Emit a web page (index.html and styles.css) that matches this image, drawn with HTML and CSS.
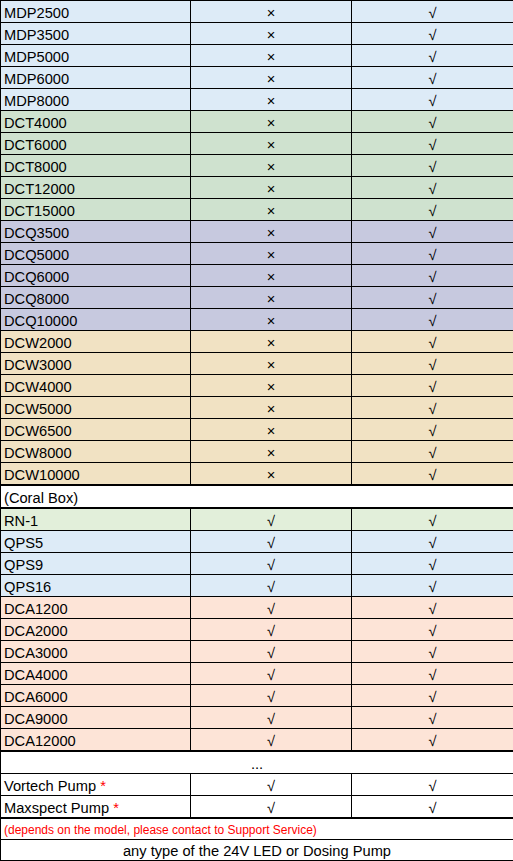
FILE: index.html
```html
<!DOCTYPE html>
<html>
<head>
<meta charset="utf-8">
<link rel="stylesheet" href="styles.css">
</head>
<body>
<table class="compat">
<colgroup><col class="c1"><col class="c2"><col class="c3"></colgroup>
<tbody>
<tr class="mdp"><td>MDP2500</td><td class="mk">×</td><td class="mk">√</td></tr>
<tr class="mdp"><td>MDP3500</td><td class="mk">×</td><td class="mk">√</td></tr>
<tr class="mdp"><td>MDP5000</td><td class="mk">×</td><td class="mk">√</td></tr>
<tr class="mdp"><td>MDP6000</td><td class="mk">×</td><td class="mk">√</td></tr>
<tr class="mdp"><td>MDP8000</td><td class="mk">×</td><td class="mk">√</td></tr>
<tr class="dct"><td>DCT4000</td><td class="mk">×</td><td class="mk">√</td></tr>
<tr class="dct"><td>DCT6000</td><td class="mk">×</td><td class="mk">√</td></tr>
<tr class="dct"><td>DCT8000</td><td class="mk">×</td><td class="mk">√</td></tr>
<tr class="dct"><td>DCT12000</td><td class="mk">×</td><td class="mk">√</td></tr>
<tr class="dct"><td>DCT15000</td><td class="mk">×</td><td class="mk">√</td></tr>
<tr class="dcq"><td>DCQ3500</td><td class="mk">×</td><td class="mk">√</td></tr>
<tr class="dcq"><td>DCQ5000</td><td class="mk">×</td><td class="mk">√</td></tr>
<tr class="dcq"><td>DCQ6000</td><td class="mk">×</td><td class="mk">√</td></tr>
<tr class="dcq"><td>DCQ8000</td><td class="mk">×</td><td class="mk">√</td></tr>
<tr class="dcq"><td>DCQ10000</td><td class="mk">×</td><td class="mk">√</td></tr>
<tr class="dcw"><td>DCW2000</td><td class="mk">×</td><td class="mk">√</td></tr>
<tr class="dcw"><td>DCW3000</td><td class="mk">×</td><td class="mk">√</td></tr>
<tr class="dcw"><td>DCW4000</td><td class="mk">×</td><td class="mk">√</td></tr>
<tr class="dcw"><td>DCW5000</td><td class="mk">×</td><td class="mk">√</td></tr>
<tr class="dcw"><td>DCW6500</td><td class="mk">×</td><td class="mk">√</td></tr>
<tr class="dcw"><td>DCW8000</td><td class="mk">×</td><td class="mk">√</td></tr>
<tr class="dcw"><td>DCW10000</td><td class="mk">×</td><td class="mk">√</td></tr>
<tr class="sep"><td colspan="3">(Coral Box)</td></tr>
<tr class="rn"><td>RN-1</td><td class="mk">√</td><td class="mk">√</td></tr>
<tr class="mdp"><td>QPS5</td><td class="mk">√</td><td class="mk">√</td></tr>
<tr class="mdp"><td>QPS9</td><td class="mk">√</td><td class="mk">√</td></tr>
<tr class="mdp"><td>QPS16</td><td class="mk">√</td><td class="mk">√</td></tr>
<tr class="dca"><td>DCA1200</td><td class="mk">√</td><td class="mk">√</td></tr>
<tr class="dca"><td>DCA2000</td><td class="mk">√</td><td class="mk">√</td></tr>
<tr class="dca"><td>DCA3000</td><td class="mk">√</td><td class="mk">√</td></tr>
<tr class="dca"><td>DCA4000</td><td class="mk">√</td><td class="mk">√</td></tr>
<tr class="dca"><td>DCA6000</td><td class="mk">√</td><td class="mk">√</td></tr>
<tr class="dca"><td>DCA9000</td><td class="mk">√</td><td class="mk">√</td></tr>
<tr class="dca"><td>DCA12000</td><td class="mk">√</td><td class="mk">√</td></tr>
<tr class="dots"><td colspan="3" class="mk">...</td></tr>
<tr class="plain top2"><td>Vortech Pump <span class="star">*</span></td><td class="mk">√</td><td class="mk">√</td></tr>
<tr class="plain"><td>Maxspect Pump <span class="star">*</span></td><td class="mk">√</td><td class="mk">√</td></tr>
<tr class="note"><td colspan="3">(depends on the model, please contact to Support Service)</td></tr>
<tr class="plain last"><td colspan="3" class="mk">any type of the 24V LED or Dosing Pump</td></tr>
</tbody>
</table>
</body>
</html>
```

FILE: styles.css
```css
html, body {
  margin: 0;
  padding: 0;
  background: #ffffff;
}
.compat {
  border-collapse: collapse;
  width: 513px;
  table-layout: fixed;
  font-family: "Liberation Sans", Arial, sans-serif;
  font-size: 14.667px;
  color: #000;
}
.c1 { width: 190px; }
.c2 { width: 161px; }
.c3 { width: 162px; }
.compat td {
  border: 1px solid #000;
  height: 21px;
  padding: 0 0 0 3px;
  line-height: 17px;
  vertical-align: bottom;
  white-space: nowrap;
  overflow: hidden;
}
.compat td.mk {
  text-align: center;
  padding: 0;
}
.mdp td { background: #ddebf7; }
.dct td { background: #cfe2cf; }
.dcq td { background: #c7c9df; }
.dcw td { background: #f1e2c3; }
.rn td { background: #e2efda; }
.dca td { background: #fde4d7; }
.sep td, .plain td, .dots td, .note td { background: #fff; }
.sep td { border-top: 2px solid #000; border-bottom: 2px solid #000; }
.dots td { border-top: 2px solid #000; }
.note td {
  border-top: 2px solid #000;
  color: #ff0000;
  font-size: 12px;
  height: 20px;
}
.star { color: #ff0000; }
.last td { height: 20px; }
```
